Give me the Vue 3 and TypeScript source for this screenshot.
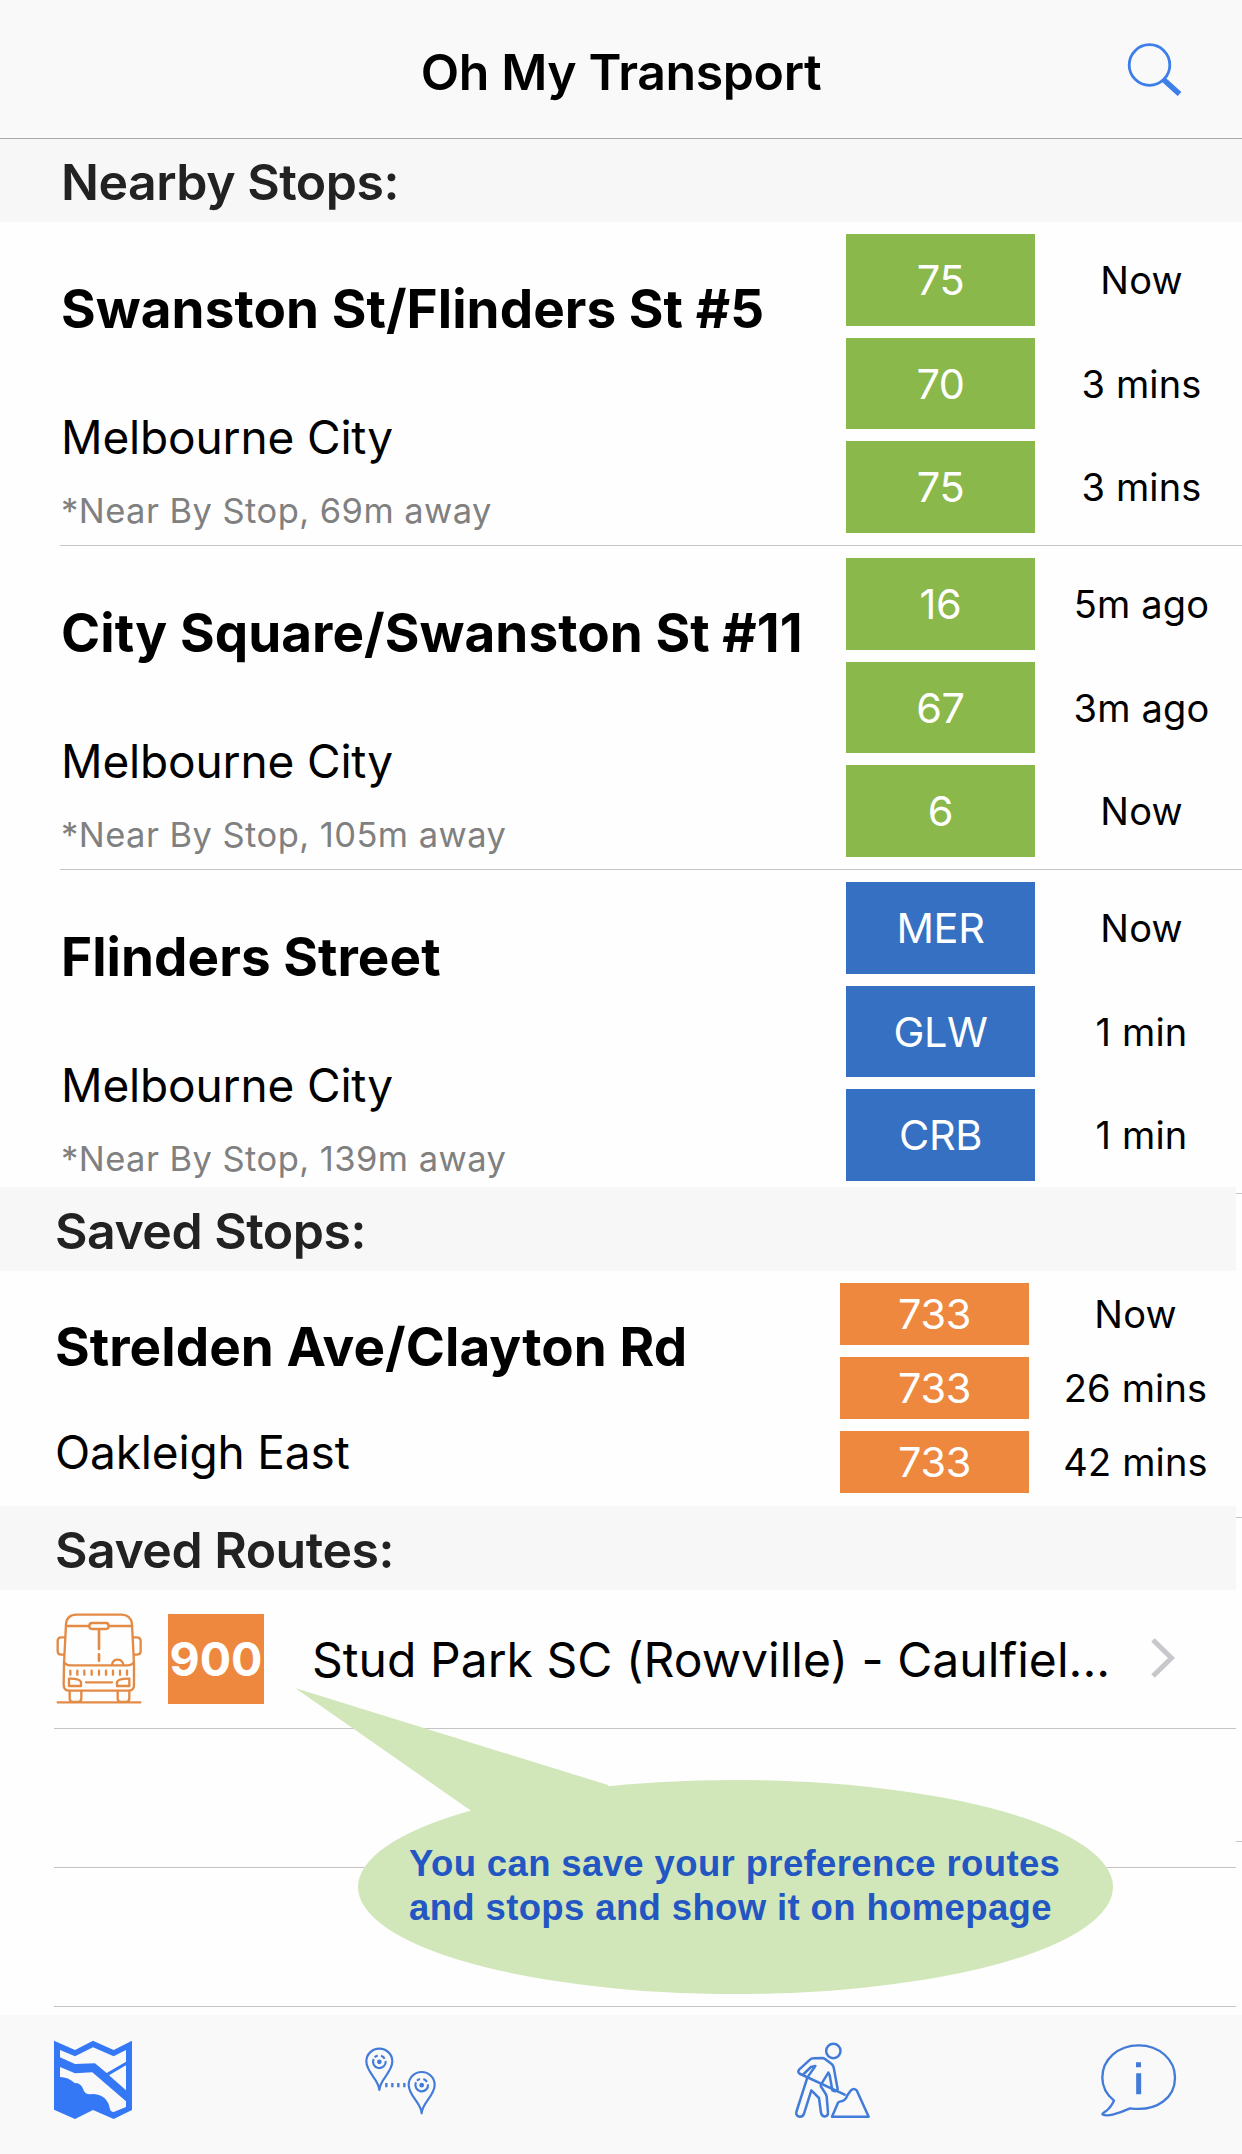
<script setup lang="ts">
interface Departure {
  route: string
  due: string
}
interface Stop {
  name: string
  suburb: string
  note?: string
  mode: 'tram' | 'train' | 'bus'
  departures: Departure[]
}

const nearbyStops: Stop[] = [
  {
    name: 'Swanston St/Flinders St #5',
    suburb: 'Melbourne City',
    note: '*Near By Stop, 69m away',
    mode: 'tram',
    departures: [
      { route: '75', due: 'Now' },
      { route: '70', due: '3 mins' },
      { route: '75', due: '3 mins' },
    ],
  },
  {
    name: 'City Square/Swanston St #11',
    suburb: 'Melbourne City',
    note: '*Near By Stop, 105m away',
    mode: 'tram',
    departures: [
      { route: '16', due: '5m ago' },
      { route: '67', due: '3m ago' },
      { route: '6', due: 'Now' },
    ],
  },
  {
    name: 'Flinders Street',
    suburb: 'Melbourne City',
    note: '*Near By Stop, 139m away',
    mode: 'train',
    departures: [
      { route: 'MER', due: 'Now' },
      { route: 'GLW', due: '1 min' },
      { route: 'CRB', due: '1 min' },
    ],
  },
]

const savedStops: Stop[] = [
  {
    name: 'Strelden Ave/Clayton Rd',
    suburb: 'Oakleigh East',
    mode: 'bus',
    departures: [
      { route: '733', due: 'Now' },
      { route: '733', due: '26 mins' },
      { route: '733', due: '42 mins' },
    ],
  },
]

const grilleSlots = [121, 142, 163, 185, 207, 228, 249, 270, 291]
</script>

<template>
  <div class="app">
    <header class="navbar">
      <h1 class="title">Oh My Transport</h1>
      <svg class="search" viewBox="0 0 60 56" fill="none" stroke="#3d7ee8">
        <circle cx="27.5" cy="25" r="20.3" stroke-width="2.8" />
        <path d="M42 40 L57.500 54" stroke-width="5.500" />
      </svg>
    </header>

    <section>
      <h2 class="heading">Nearby Stops:</h2>
      <article v-for="stop in nearbyStops" :key="stop.name" class="stop">
        <div class="info">
          <h3 class="name">{{ stop.name }}</h3>
          <p class="suburb">{{ stop.suburb }}</p>
          <p class="note">{{ stop.note }}</p>
        </div>
        <div class="departures">
          <template v-for="(d, i) in stop.departures" :key="i">
            <span class="badge" :class="stop.mode">{{ d.route }}</span>
            <span class="due">{{ d.due }}</span>
          </template>
        </div>
      </article>
    </section>

    <div class="lower">
      <main class="saved">
        <section>
          <h2 class="heading">Saved Stops:</h2>
          <article v-for="stop in savedStops" :key="stop.name" class="stop compact">
            <div class="info">
              <h3 class="name">{{ stop.name }}</h3>
              <p class="suburb">{{ stop.suburb }}</p>
            </div>
            <div class="departures">
              <template v-for="(d, i) in stop.departures" :key="i">
                <span class="badge" :class="stop.mode">{{ d.route }}</span>
                <span class="due">{{ d.due }}</span>
              </template>
            </div>
          </article>
        </section>

        <section class="routes">
          <h2 class="heading">Saved Routes:</h2>
          <div class="route">
            <svg class="bus-icon" viewBox="78 70 258 272" fill="none" stroke="#e38a45" stroke-width="7" stroke-linecap="round" stroke-linejoin="round">
              <path d="M102 222 L108 104 Q110 75 140 75 H274 Q303 75 306 104 L312 222 V286 Q312 303 295 303 H119 Q101 303 101 286 Z" />
              <path d="M108 109 H178 M236 109 H306" />
              <rect x="178" y="100" width="58" height="18" rx="8" />
              <path d="M207 120 V178 M207 194 V213" stroke-width="8" />
              <path d="M102 217 Q108 227 122 227 H292 Q306 227 312 217" />
              <path d="M246 225 Q249 210 263 210 Q277 210 280 225" />
              <path d="M103 143 H94 Q83 143 83 154 V184 Q83 195 94 195 H101 M311 143 H320 Q332 143 332 154 V184 Q332 195 320 195 H313" />
              <path v-for="x in grilleSlots" :key="x" :d="`M${x} 243 V255`" />
              <path d="M117 267 Q148 266 153 277 V289 H117 Z M298 267 Q266 266 261 277 V289 H298 Z M168 278 H246" />
              <path d="M119 304 V326 Q119 337 129 337 H144 Q154 337 154 326 V304 M263 304 V326 Q263 337 273 337 H288 Q298 337 298 326 V304 M83 338 H331" />
            </svg>
            <span class="number">900</span>
            <span class="destination">Stud Park SC (Rowville) - Caulfiel...</span>
            <svg class="chevron" viewBox="0 0 26 42" fill="none" stroke="#c7c7cc" stroke-width="5">
              <path d="M2 3 L20.500 21 L2 39" />
            </svg>
          </div>
          <div class="blank"></div>
          <div class="blank"></div>
          <div class="callout">
            <svg class="bubble" viewBox="0 0 820 308" fill="#d1e7b9">
              <ellipse cx="441.5" cy="200" rx="377.500" ry="107" />
              <path d="M1 1 L314 98 L330 150 L200 150 L176 123 Z" />
            </svg>
            <p class="tip">You can save your preference routes<br />and stops and show it on homepage</p>
          </div>
        </section>
      </main>
      <aside class="edge">
        <i></i><i></i><i></i>
      </aside>
    </div>

    <nav class="tabs">
      <svg class="tab map" viewBox="0 15 390 375">
        <path
          fill="#3478f6"
          fill-rule="evenodd"
          d="M72 92 L135 120 L189 92 L251 120 L306 92 V300 L251 327 L189 300 L135 327 L72 299 Z M90 120 V142 L135 162 L195 160 L230 189 L288 155 V120 L251 139 L189 112 L135 139 Z M288 166 L237 196 L288 241 Z M90 171 V201 Q115 201 134 219 Q153 219 159 236 Q165 256 186 252 Q232 252 240 298 Q242 307 251 306 L288 291 V274 L187 187 L135 190 Z"
        />
      </svg>
      <svg class="tab pins" viewBox="0 -15 390 375" fill="none" stroke="#437bd8" stroke-width="6.5">
        <g v-for="p in [[0, 0], [127, 70]]" :key="p[0]" :transform="`translate(${p[0]} ${p[1]})`">
          <path d="M118 210 C117 178 79 158 79 124 A39 38 0 0 1 157 124 C157 158 119 178 118 210 Z" stroke-linejoin="round" />
          <path d="M123 107 A19 19 0 0 1 134 116 M137 123 A19 19 0 1 1 101 117 M104 112 A19 19 0 0 1 113 107" />
          <circle cx="118" cy="125.500" r="7" fill="#437bd8" stroke="none" />
        </g>
        <path d="M139 189 V202 M157 189 V202 M175 189 V202 M193 189 V202" stroke-width="7" />
      </svg>
      <svg class="tab works" viewBox="0 -15 330 375" fill="none" stroke="#437bd8" stroke-width="7.5" stroke-linecap="round" stroke-linejoin="round">
        <circle cx="160" cy="93" r="21.500" />
        <path d="M61 162 Q51 158 58 148 L90 119 Q94 115 100 115 L127 114 Q131 114 135 117 L154 131 Q159 135 161 142 L173 208 Q170 217 157 211 L149 166 L145 158 L123 194" />
        <path d="M61 162 L194 224 M71 162 L93 141 L106 138 L84 170" />
        <path d="M82 173 L49 276 Q47 288 59 290 Q69 291 72 281 L94 211 L117 234 L123 279 Q127 291 137 289 Q145 286 144 278 L140 230 Q139 223 134 217 L122 198" />
        <path d="M156 290 L174 248 Q176 245 187 243 Q197 240 202 226 L213 211 Q221 203 230 211 L266 290 Z" />
      </svg>
      <svg class="tab info-tab" viewBox="0 -15 390 375" fill="none" stroke="#437bd8" stroke-width="7" stroke-linejoin="round">
        <path d="M102 242 C78 222 67 201 67 173 C67 118 114 76 176 76 C238 76 285 119 285 173 C285 230 235 276 150 265 Q121 278 98 284 Q77 289 67 283 Q69 279 77 274 Q91 264 102 242 Z" />
        <path d="M168 134 H183 M176 160 V223" stroke-width="15" />
      </svg>
    </nav>
  </div>
</template>

<style>
body {
  margin: 0;
  background: #fefefe;
}
</style>

<style scoped>
.app {
  width: 1242px;
  height: 2154px;
  overflow: hidden;
  display: flex;
  flex-direction: column;
  font-family: Inter, 'Liberation Sans', sans-serif;
  color: #000;
  background: #fefefe;
}
h1, h2, h3, p {
  margin: 0;
}
.navbar {
  box-sizing: border-box;
  height: 139px;
  padding-top: 6px;
  display: grid;
  grid-template-columns: 120px 1fr 120px;
  border-bottom: 1px solid #a9a9ab;
  background: #f9f9f9;
}
.title {
  grid-column: 2;
  text-align: center;
  font-size: 50px;
  font-weight: 600;
  line-height: 132px;
  letter-spacing: -0.4px;
}
.search {
  width: 60px;
  height: 56px;
  margin-top: 34px;
}
.heading {
  box-sizing: border-box;
  height: 83px;
  padding: 2px 0 0 61px;
  font-size: 50px;
  font-weight: 600;
  line-height: 83px;
  letter-spacing: -0.5px;
  color: #222;
  background: #f7f7f7;
}
.stop {
  box-sizing: border-box;
  height: 324px;
  margin-left: 60px;
  display: flex;
  border-bottom: 1px solid #c4c4c6;
}
.stop:last-child {
  height: 317px;
  border-bottom: 0;
}
.info {
  flex: none;
  box-sizing: border-box;
  width: 786px;
  padding: 57px 0 0 1px;
  white-space: nowrap;
}
.name {
  font-size: 53px;
  font-weight: 700;
  line-height: 60px;
  letter-spacing: 0.07px;
}
.suburb {
  margin-top: 70px;
  font-size: 46px;
  line-height: 56px;
  letter-spacing: -0.15px;
}
.note {
  margin-top: 24px;
  font-size: 34.5px;
  line-height: 44px;
  letter-spacing: 0.45px;
  color: #808080;
}
.departures {
  padding-top: 12px;
  display: grid;
  grid-template-columns: 189px 207px;
  grid-template-rows: 92px 91px 92px;
  row-gap: 12px;
  align-content: start;
}
.badge, .due {
  display: flex;
  align-items: center;
  justify-content: center;
}
.badge {
  font-size: 41.5px;
  letter-spacing: -0.4px;
  color: #fff;
}
.due {
  padding-left: 6px;
  font-size: 38px;
  letter-spacing: 0.15px;
}
.tram {
  background: #8ab84a;
}
.train {
  background: #3570c2;
}
.bus {
  background: #ee883f;
}
.lower {
  height: 828px;
  display: flex;
}
.saved {
  width: 1236px;
}
.saved .heading {
  height: 84px;
  padding: 3px 0 0 55px;
}
.stop.compact {
  height: 235px;
  margin-left: 54px;
}
.compact .info {
  padding-top: 46px;
}
.compact .suburb {
  margin-top: 47px;
}
.compact .departures {
  grid-template-rows: 62px 62px 62px;
}
.routes {
  position: relative;
}
.route, .blank {
  box-sizing: border-box;
  height: 139px;
  margin-left: 54px;
  border-bottom: 1px solid #c4c4c6;
}
.route {
  display: flex;
  align-items: flex-start;
}
.bus-icon {
  width: 86px;
  height: 90.67px;
  margin: 23px 0 0 2px;
}
.number {
  width: 96px;
  height: 90px;
  margin: 24px 0 0 26px;
  text-align: center;
  font-size: 46.5px;
  font-weight: 700;
  line-height: 90px;
  color: #fff;
  background: #ee883f;
}
.destination {
  width: 839px;
  margin: 40px 0 0 48px;
  font-size: 48px;
  line-height: 60px;
  letter-spacing: 0.04px;
  white-space: nowrap;
}
.chevron {
  width: 26px;
  height: 42px;
  margin-top: 47px;
}
.callout {
  position: absolute;
  left: 294px;
  top: 181px;
  width: 820px;
  height: 308px;
}
.bubble {
  display: block;
  width: 820px;
  height: 308px;
}
.tip {
  position: absolute;
  left: 115px;
  top: 155px;
  font: 700 36.5px/44px 'Liberation Sans', sans-serif;
  letter-spacing: 0.37px;
  color: #2356c3;
  white-space: nowrap;
}
.edge {
  width: 6px;
  padding-top: 6px;
  display: flex;
  flex-direction: column;
  gap: 323px;
}
.edge i {
  height: 1px;
  background: #c4c4c6;
}
.tabs {
  height: 139px;
  display: flex;
  background: #f9f9f9;
}
.tab {
  width: 130px;
  height: 125px;
}
.map {
  margin-left: 30px;
}
.pins {
  margin-left: 180px;
}
.works {
  width: 110px;
  margin-left: 310px;
}
.info-tab {
  margin-left: 190px;
}
</style>
